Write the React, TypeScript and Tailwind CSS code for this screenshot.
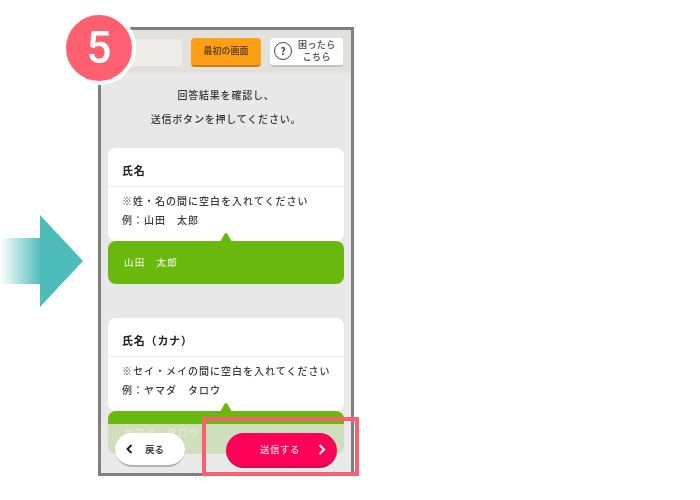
const font = "font-['Noto_Sans_CJK_JP','Noto_Sans',sans-serif]";

function Notch() {
  return (
    <svg className="absolute left-[111px] top-[-9px]" width="14" height="10" viewBox="0 0 14 10">
      <path d="M1 10 L5.5 2 Q7 0 8.5 2 L13 10 Z" fill="#69b80e" />
    </svg>
  );
}

function Question({ title, lines, answer }: { title: string; lines: string[]; answer: string }) {
  return (
    <section>
      <div className="rounded-[8px] bg-white h-[93px]">
        <div className="h-[39px] border-b border-[#efefef] pl-[14px] flex items-center pt-[6px] text-[11px] font-bold tracking-[0.8px] text-[#222]">
          {title}
        </div>
        <div className="pl-[14px] pt-[4px] text-[10px] font-medium leading-[19px] tracking-[1px] text-[#3a3a3a]">
          {lines.map((l) => (
            <div key={l} className="whitespace-pre">{l}</div>
          ))}
        </div>
      </div>
      <div className="relative h-[43px] rounded-[8px] bg-[#69b80e] pl-[16px] flex items-center text-[9.5px] font-medium tracking-[1.3px] text-[#e4f2cf] whitespace-pre">
        <Notch />
        {answer}
      </div>
    </section>
  );
}

export default function App() {
  return (
    <div className={`relative w-[700px] h-[500px] bg-white overflow-hidden flex blur-[0.5px] ${font}`}>
      <svg className="mt-[215px] shrink-0" width="83" height="92" viewBox="0 0 83 92">
        <defs>
          <linearGradient id="g" x1="0" x2="1" y1="0" y2="0">
            <stop offset="0" stopColor="#4fbcbc" stopOpacity="0" />
            <stop offset="1" stopColor="#4fbcbc" />
          </linearGradient>
        </defs>
        <rect x="0" y="23" width="41" height="46" fill="url(#g)" />
        <path d="M40 0 L83 46 L40 92 Z" fill="#4fbcbc" />
      </svg>

      <div className="relative ml-[15px] mt-[27px] w-[256px] h-[449px] border-[3px] border-[#7f7f7f] bg-[#e9e8e8] overflow-hidden shrink-0">
        <header className="h-[43px] bg-[#e3e1db] flex items-center pt-[1px] pr-[8px]">
          <div className="ml-[10px] w-[71px] h-[27px] rounded-[3px] bg-[#eeedea]" />
          <div className="ml-[9px] w-[70px] h-[29px] rounded-[4px] bg-[#ff9f16] border-b-2 border-[#c9801a] flex items-center justify-center text-[9px] font-bold text-[#6e4a10]">
            最初の画面
          </div>
          <div className="ml-[9px] w-[73px] h-[29px] rounded-[4px] bg-white border-b-2 border-[#c4c2bc] flex items-center pl-[4px] gap-[6px]">
            <div className="w-[18px] h-[18px] rounded-full border-[1.5px] border-[#444] flex items-center justify-center text-[10px] font-bold leading-none text-[#444]">
              ?
            </div>
            <div className="text-[9px] leading-[12px] tracking-[0.4px] font-bold text-[#666] text-center">
              困ったら
              <br />
              こちら
            </div>
          </div>
        </header>

        <main className="px-[7px]">
          <div className="pt-[10px] h-[75px] text-center text-[10px] leading-[24px] tracking-[0.8px] font-medium text-[#333]">
            <div>回答結果を確認し、</div>
            <div>送信ボタンを押してください。</div>
          </div>
          <div className="flex flex-col gap-[34px]">
            <Question title="氏名" lines={["※姓・名の間に空白を入れてください", "例：山田　太郎"]} answer="山田　太郎" />
            <Question title="氏名（カナ）" lines={["※セイ・メイの間に空白を入れてください", "例：ヤマダ　タロウ"]} answer="ヤマダ　タロウ" />
          </div>
        </main>

        <footer className="absolute left-0 right-0 bottom-0 h-[49px] bg-[#e9e8e8]/80 flex items-start pt-[9px] pl-[14px]">
          <div className="w-[70px] h-[34px] rounded-full bg-white border-b-2 border-[#b5b5b0] flex items-center pl-[11px] gap-[12px] text-[9.5px] font-bold text-[#444]">
            <svg width="7" height="10" viewBox="0 0 7 10">
              <path d="M5.5 1 L1.5 5 L5.5 9" fill="none" stroke="#222" strokeWidth="2" />
            </svg>
            戻る
          </div>
          <div className="ml-[41px] w-[111px] h-[35px] rounded-full bg-[#ff0058] border-b-2 border-[#c4104f] flex items-center text-[9.5px] font-medium tracking-[0.5px] text-[#ffd8e4] pl-[34px]">
            送信する
            <svg className="ml-[18px]" width="8" height="11" viewBox="0 0 8 11">
              <path d="M1.5 1 L6 5.5 L1.5 10" fill="none" stroke="#fff" strokeWidth="2" />
            </svg>
          </div>
        </footer>
      </div>

      <div className="absolute left-[62px] top-[11px] w-[74px] h-[74px] rounded-full bg-[#ff5f6e] border-[4px] border-white flex items-center justify-center text-[44px] font-medium leading-none text-white font-['Roboto',sans-serif]">
        5
      </div>

      <div className="absolute left-[202px] top-[417px] w-[157px] h-[59px] border-[4px] border-[#f9616f]" />
    </div>
  );
}
